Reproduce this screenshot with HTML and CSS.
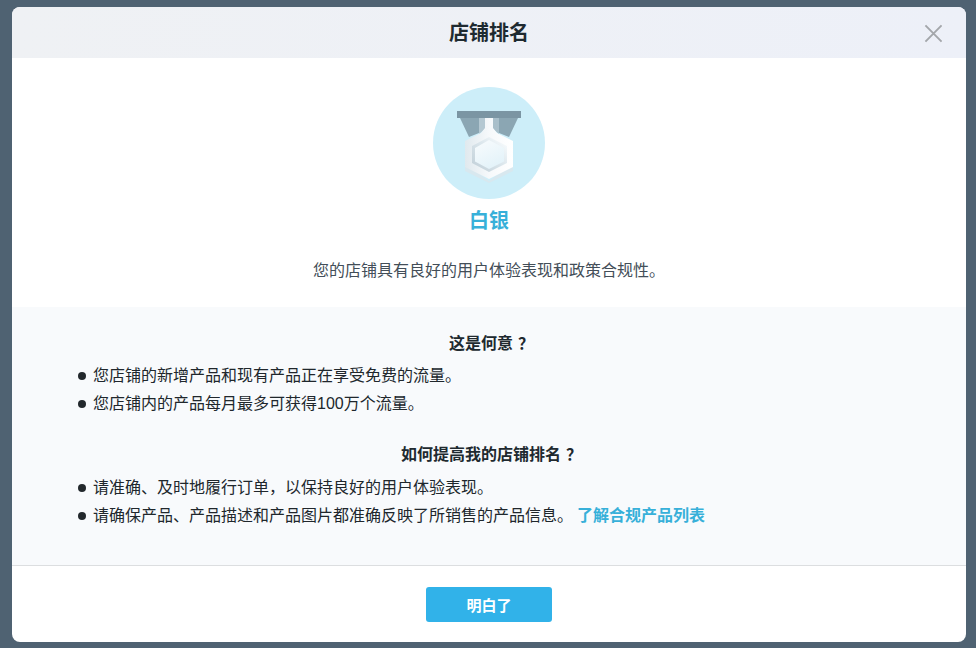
FILE: index.html
```html
<!DOCTYPE html>
<html lang="zh-CN">
<head>
  <meta charset="UTF-8" />
  <meta name="viewport" content="width=device-width, initial-scale=1" />
  <title>店铺排名</title>
  <link rel="stylesheet" href="styles.css">
</head>
<body>
  <div class="overlay">
    <div class="modal">
      <!-- Title bar -->
      <header class="modal-header">
        <h1>店铺排名</h1>
        <svg class="close-icon" viewBox="0 0 20 20" aria-label="关闭">
          <path d="M1.500 1.500 L18.500 18.500 M18.500 1.500 L1.500 18.500" />
        </svg>
      </header>

      <!-- Rank summary -->
      <section class="rank">
        <svg class="medal" viewBox="0 0 112 112">
          <defs>
            <linearGradient id="bodyGrad" x1="0" y1="0" x2="1" y2="0">
              <stop offset="0" stop-color="#e0e9ee" />
              <stop offset="0.500" stop-color="#f6f9fb" />
              <stop offset="1" stop-color="#ffffff" />
            </linearGradient>
            <linearGradient id="ringGrad" x1="0.100" y1="0.900" x2="0.900" y2="0.100">
              <stop offset="0" stop-color="#c4d2da" />
              <stop offset="0.550" stop-color="#dbe6ec" />
              <stop offset="1" stop-color="#f6fafc" />
            </linearGradient>
            <linearGradient id="gemGrad" x1="0.200" y1="0" x2="0.700" y2="1">
              <stop offset="0" stop-color="#f7fbfd" />
              <stop offset="1" stop-color="#e2f2f9" />
            </linearGradient>
          </defs>
          <circle cx="56" cy="56" r="56" fill="#cdeef9" />
          <!-- ribbon -->
          <path d="M27 31 H46 V46 L36 50 Z" fill="#8ba6b3" />
          <path d="M85 31 H66 V46 L76 50 Z" fill="#8ba6b3" />
          <path d="M46 31 H52 V42 L46 47 Z" fill="#b4c8d2" />
          <path d="M66 31 H60 V42 L66 47 Z" fill="#a9bfca" />
          <path d="M24 24 H88 V31 H24 Z" fill="#7b95a3" />
          <!-- medal body -->
          <path d="M32 76 L56 94 L80 76 V84 L56 96 L32 84 Z" fill="#d8e8ef" />
          <path d="M32 54 L48 46 L52 41 V31 H60 V41 L64 46 L80 54 V80 L56 92 L32 80 Z" fill="url(#bodyGrad)" />
          <!-- hexagon -->
          <path d="M56 50 L74 59 V76 L56 85 L39 76 V59 Z" fill="url(#ringGrad)" />
          <path d="M56 53 L71 61 V74.500 L56 82 L42 74.500 V61 Z" fill="url(#gemGrad)" />
        </svg>
        <div class="rank-name">白银</div>
        <p class="rank-desc">您的店铺具有良好的用户体验表现和政策合规性。</p>
      </section>

      <!-- Explanation -->
      <section class="info">
        <h2>这是何意<span class="qmark">？</span></h2>
        <ul>
          <li>您店铺的新增产品和现有产品正在享受免费的流量。</li>
          <li>您店铺内的产品每月最多可获得100万个流量。</li>
        </ul>
        <h2 class="second">如何提高我的店铺排名<span class="qmark">？</span></h2>
        <ul>
          <li>请准确、及时地履行订单，以保持良好的用户体验表现。</li>
          <li>请确保产品、产品描述和产品图片都准确反映了所销售的产品信息。<a href="#">了解合规产品列表</a></li>
        </ul>
      </section>

      <footer class="modal-footer">
        <button type="button">明白了</button>
      </footer>
    </div>
  </div>
</body>
</html>
```

FILE: styles.css
```css
/* Reset */
* {
  box-sizing: border-box;
  margin: 0;
  padding: 0;
}

body, html {
  height: 100%;
  font-family: "Liberation Sans", "Noto Sans CJK SC", sans-serif;
  background-color: #4f6272;
  color: #20272c;
  overflow: hidden;
}

.overlay {
  height: 100vh;
  padding: 7px 10px 6px 12px;
}

.modal {
  height: 100%;
  display: flex;
  flex-direction: column;
  background: white;
  border-radius: 8px;
  overflow: hidden;
}

/* Title bar */
.modal-header {
  position: relative;
  height: 51px;
  padding-bottom: 2px;
  display: flex;
  align-items: center;
  justify-content: center;
  background: linear-gradient(90deg, #eff1f4, #edf0f8);
}

.modal-header h1 {
  font-size: 20px;
  font-weight: 700;
  color: #1e2a30;
}

.close-icon {
  position: absolute;
  right: 23px;
  top: 17px;
  width: 19px;
  height: 19px;
  fill: none;
  stroke: #a3a6aa;
  stroke-width: 2;
}

/* Rank summary */
.rank {
  height: 249px;
  padding-top: 29px;
  display: flex;
  flex-direction: column;
  align-items: center;
}

.medal {
  width: 112px;
  height: 112px;
}

.rank-name {
  margin-top: 7px;
  font-size: 20px;
  line-height: 30px;
  font-weight: 700;
  color: #37b0d9;
}

.rank-desc {
  margin-top: 23px;
  font-size: 16px;
  line-height: 24px;
  color: #434e58;
}

/* Explanation */
.info {
  flex: 1;
  padding: 25px 66px 0;
  background-color: #f8fafc;
  font-size: 16px;
}

.info h2 {
  font-size: 16px;
  line-height: 24px;
  font-weight: 700;
  text-align: center;
  color: #20292f;
}

.info h2.second {
  margin-top: 25px;
}

/* glyph sits left in its box here, centre it without moving the heading */
.qmark {
  margin-left: 5px;
  margin-right: -5px;
}

.info ul {
  list-style: none;
  margin-top: 6px;
}

.info h2.second + ul {
  margin-top: 7px;
}

.info li {
  position: relative;
  padding-left: 15px;
  line-height: 28px;
}

.info li::before {
  content: "";
  position: absolute;
  left: 0;
  top: 10px;
  width: 8px;
  height: 8px;
  border-radius: 50%;
  background: #22282c;
}

.info a {
  margin-left: 4px;
  color: #37b0d9;
  font-weight: 700;
  text-decoration: none;
}

/* Footer */
.modal-footer {
  height: 77px;
  padding-top: 21px;
  display: flex;
  justify-content: center;
  border-top: 1px solid #dcdee0;
}

.modal-footer button {
  width: 126px;
  height: 35px;
  border: none;
  border-radius: 3px;
  background-color: #31b2e9;
  color: white;
  font-family: inherit;
  font-size: 15px;
  font-weight: 700;
}
```
